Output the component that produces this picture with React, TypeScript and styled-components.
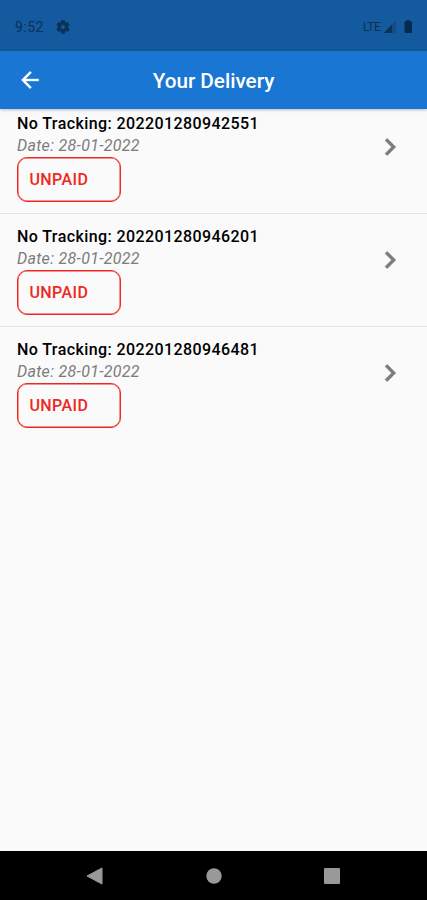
import React from "react";
import styled, { createGlobalStyle } from "styled-components";

const GlobalStyle = createGlobalStyle`
  * { box-sizing: border-box; }
  body { margin: 0; background: #fafafa; font-family: Roboto, "Liberation Sans", sans-serif; }
`;

const Screen = styled.div`
  display: flex;
  flex-direction: column;
  width: 100%;
  height: 900px;
  overflow: hidden;
  background: #fafafa;
`;

const StatusBar = styled.div`
  flex: none;
  display: flex;
  align-items: center;
  height: 51px;
  padding: 2px 14px 0 15px;
  background: #145a9e;
  color: #0b3157;
`;

const Clock = styled.span`
  width: 40px;
  font-size: 14px;
  line-height: 16px;
  letter-spacing: 0.45px;
`;

const StatusIcons = styled.div`
  display: flex;
  align-items: center;
  margin-left: auto;
`;

const Network = styled.span`
  margin-right: 3px;
  font-size: 12px;
  line-height: 14px;
  letter-spacing: -0.5px;
  width: 18px;
`;

const AppBar = styled.header`
  flex: none;
  display: grid;
  grid-template-columns: 60px 1fr 60px;
  align-items: center;
  height: 58px;
  background: #1976d2;
  color: #fff;
  box-shadow: 0 1px 3px rgba(0, 0, 0, 0.25);
  z-index: 1;
`;

const BackButton = styled.button`
  display: flex;
  justify-content: center;
  padding: 0;
  border: 0;
  background: none;
  color: inherit;
`;

const Title = styled.h1`
  margin: 0;
  padding-top: 2px;
  text-align: center;
  font-size: 20.7px;
  line-height: 24px;
  font-weight: 500;
  white-space: nowrap;
`;

const List = styled.ul`
  flex: 1;
  margin: 0;
  padding: 0;
  list-style: none;
`;

const Row = styled.li`
  display: flex;
  justify-content: space-between;
  height: 113px;
  padding: 12px 20px 0 17px;
  border-bottom: 1px solid #e4e4e4;
  &:first-child { height: 105px; padding-top: 4px; }
  &:last-child { border-bottom: 0; }
`;

const Details = styled.div`
  display: flex;
  flex-direction: column;
  align-items: flex-start;
`;

const Tracking = styled.div`
  font-size: 16px;
  line-height: 22px;
  font-weight: 500;
  letter-spacing: 0.41px;
  color: #000;
  white-space: nowrap;
`;

const DateLine = styled.div`
  font-size: 16px;
  line-height: 22px;
  font-style: italic;
  letter-spacing: 0.3px;
  color: #7c7c7c;
`;

const Status = styled.div`
  display: flex;
  align-items: center;
  width: 104px;
  height: 45px;
  padding-left: 11.5px;
  border: 1px solid #ee2722;
  box-shadow: inset 0 0 0 0.5px #ee2722;
  border-radius: 10px;
  color: #ee2722;
  font-size: 16px;
  font-weight: 500;
  letter-spacing: 0.4px;
`;

const Chevron = styled.svg`
  margin-top: 17px;
`;

const NavBar = styled.nav`
  flex: none;
  display: flex;
  justify-content: space-between;
  align-items: center;
  height: 49px;
  padding: 0 87px 0 86px;
  background: #000;
`;

const numbers = ["202201280942551", "202201280946201", "202201280946481"];

export default function App() {
  return (
    <>
      <GlobalStyle />
      <Screen>
        <StatusBar>
          <Clock>9:52</Clock>
          <svg width="16" height="16" viewBox="0 0 24 24" fill="#0b3157">
            <path d="M19.14 12.94c.04-.3.06-.61.06-.94s-.02-.64-.07-.94l2.03-1.58a.5.5 0 0 0 .12-.61l-1.92-3.32a.49.49 0 0 0-.59-.22l-2.39.96a7 7 0 0 0-1.62-.94l-.36-2.54A.48.48 0 0 0 13.92 2.4h-3.84a.47.47 0 0 0-.47.41l-.36 2.54c-.59.24-1.13.57-1.62.94l-2.39-.96a.48.48 0 0 0-.59.22L2.74 8.87a.47.47 0 0 0 .12.61l2.03 1.58a6 6 0 0 0 0 1.88l-2.03 1.58a.5.5 0 0 0-.12.61l1.92 3.32c.12.22.37.29.59.22l2.39-.96c.5.38 1.03.7 1.62.94l.36 2.54c.05.24.24.41.48.41h3.84c.24 0 .44-.17.47-.41l.36-2.54a7 7 0 0 0 1.62-.94l2.39.96c.22.08.47 0 .59-.22l1.92-3.32a.47.47 0 0 0-.12-.61ZM12 15.6a3.6 3.6 0 1 1 0-7.2 3.6 3.6 0 0 1 0 7.2Z" stroke="#0b3157" strokeWidth="1" />
          </svg>
          <StatusIcons>
            <Network>LTE</Network>
            <svg width="29" height="14" viewBox="0 0 29 14">
              <path d="M0 13V12L12 0v13Z" fill="#134e88" />
              <path d="M0 13 8 4.5V13Z" fill="#0b3157" />
              <path d="M22.5 1.2V0h3v1.2H27c.6 0 1 .4 1 1V12c0 .6-.4 1-1 1h-5.500c-.6 0-1-.4-1-1V2.200c0-.6.4-1 1-1Z" fill="#082a4c" />
            </svg>
          </StatusIcons>
        </StatusBar>
        <AppBar>
          <BackButton aria-label="Back">
            <svg width="26" height="26" viewBox="0 0 24 24" fill="#fff">
              <path d="M20 11H7.830l5.590-5.590L12 4l-8 8 8 8 1.410-1.410L7.830 13H20v-2Z" stroke="#fff" strokeWidth="0.3" />
            </svg>
          </BackButton>
          <Title>Your Delivery</Title>
        </AppBar>
        <List>
          {numbers.map((number) => (
            <Row key={number}>
              <Details>
                <Tracking>No Tracking: {number}</Tracking>
                <DateLine>Date: 28-01-2022</DateLine>
                <Status>UNPAID</Status>
              </Details>
              <Chevron width="34" height="34" viewBox="0 0 24 24" fill="#7b7b7b">
                <path d="M10 6 8.590 7.410 13.170 12l-4.580 4.590L10 18l6-6Z" stroke="#7b7b7b" strokeWidth="0.5" />
              </Chevron>
            </Row>
          ))}
        </List>
        <NavBar>
          <svg width="17" height="18" viewBox="0 0 17 18"><path d="M1 9 16 1v16Z" fill="#999" stroke="#999" strokeLinejoin="round" /></svg>
          <svg width="16" height="16" viewBox="0 0 16 16"><circle cx="8" cy="8" r="7.700" fill="#999" /></svg>
          <svg width="16" height="16" viewBox="0 0 16 16"><rect width="16" height="16" rx="1" fill="#999" /></svg>
        </NavBar>
      </Screen>
    </>
  );
}
